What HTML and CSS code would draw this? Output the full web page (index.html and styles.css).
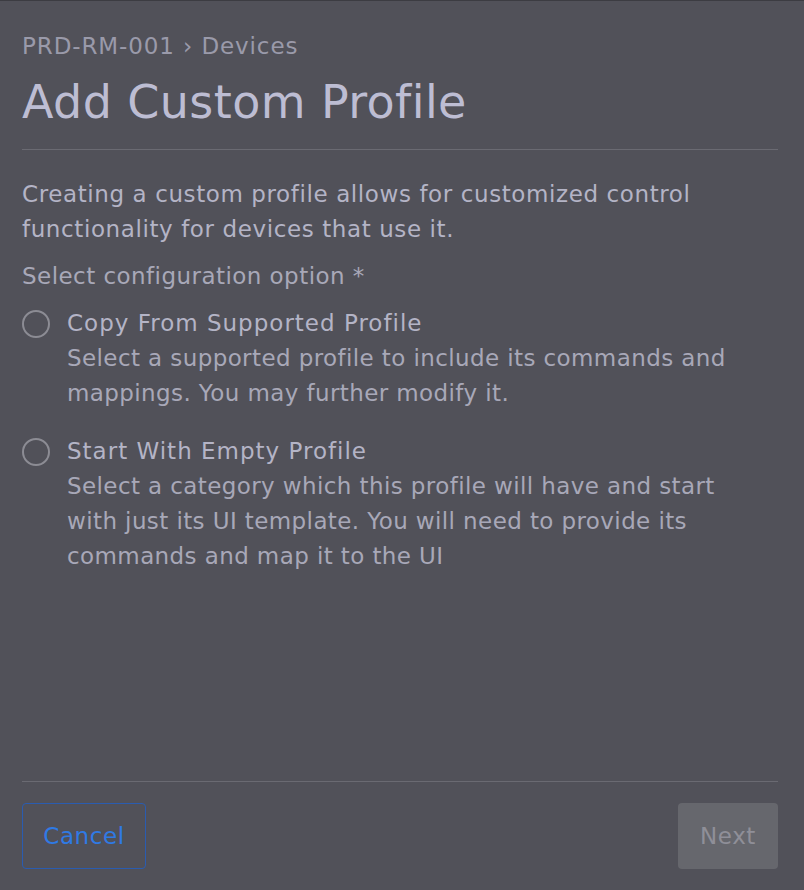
FILE: index.html
```html
<!DOCTYPE html>
<html>
<head>
<meta charset="utf-8">
<link rel="stylesheet" href="styles.css">
</head>
<body>
<div class="dialog">
  <div class="content">
    <div class="breadcrumb">PRD-RM-001 › Devices</div>
    <h1 class="title">Add Custom Profile</h1>
    <div class="divider"></div>
    <p class="intro">Creating a custom profile allows for customized control functionality for devices that use it.</p>
    <div class="label">Select configuration option *</div>
    <div class="options">
      <label class="option">
        <span class="radio"></span>
        <span class="option-text">
          <span class="option-title">Copy From Supported Profile</span>
          <span class="option-desc">Select a supported profile to include its commands and mappings. You may further modify it.</span>
        </span>
      </label>
      <label class="option">
        <span class="radio"></span>
        <span class="option-text">
          <span class="option-title">Start With Empty Profile</span>
          <span class="option-desc">Select a category which this profile will have and start with just its UI template. You will need to provide its commands and map it to the UI</span>
        </span>
      </label>
    </div>
  </div>
  <div class="footer">
    <button class="btn btn-cancel">Cancel</button>
    <button class="btn btn-next">Next</button>
  </div>
</div>
</body>
</html>
```
FILE: styles.css
```css
html, body {
  margin: 0;
  padding: 0;
  height: 100%;
}
body {
  background: #515159;
  font-family: "DejaVu Sans", "Open Sans", sans-serif;
  color: #b4b4c6;
}
.dialog {
  box-sizing: border-box;
  height: 100vh;
  border-top: 1px solid #3c3c42;
  padding: 0 26px 0 22px;
  display: flex;
  flex-direction: column;
}
.content {
  flex: 1;
  padding-top: 28px;
}
.breadcrumb {
  font-size: 23px;
  line-height: 35px;
  letter-spacing: 0.9px;
  color: #9a9aaa;
}
.title {
  margin: 10px 0 0;
  font-size: 46px;
  font-weight: 400;
  line-height: 56px;
  letter-spacing: 0.4px;
  color: #bdbdd3;
}
.divider {
  height: 1px;
  background: #6a6a72;
  margin-top: 19px;
}
.intro {
  margin: 27px 0 0;
  font-size: 23px;
  line-height: 35px;
  letter-spacing: 0.6px;
  color: #b4b4c6;
}
.label {
  margin-top: 12px;
  font-size: 23px;
  line-height: 35px;
  letter-spacing: 0.45px;
  color: #a8a8b8;
}
.options {
  margin-top: 12px;
  display: flex;
  flex-direction: column;
  gap: 23px;
}
.option {
  display: flex;
  align-items: flex-start;
  gap: 17px;
}
.radio {
  flex: none;
  box-sizing: border-box;
  width: 28px;
  height: 28px;
  border: 2.5px solid #8c8c94;
  border-radius: 50%;
  margin-top: 4px;
}
.option-text {
  display: flex;
  flex-direction: column;
  max-width: 680px;
  font-size: 23px;
  line-height: 35px;
}
.option-title {
  letter-spacing: 1px;
  color: #b4b4c6;
}
.option-desc {
  letter-spacing: 0.4px;
  color: #a8a8b8;
}
.footer {
  border-top: 1px solid #6a6a72;
  padding: 21px 0 21px;
  display: flex;
  justify-content: space-between;
}
.btn {
  font-family: inherit;
  font-size: 23px;
  letter-spacing: 0.6px;
  height: 66px;
  border-radius: 4px;
}
.btn-cancel {
  width: 124px;
  background: transparent;
  border: 1px solid #2a5cb0;
  color: #2f7ae5;
}
.btn-next {
  width: 100px;
  background: #66676d;
  border: none;
  color: #8f8f98;
}
```
